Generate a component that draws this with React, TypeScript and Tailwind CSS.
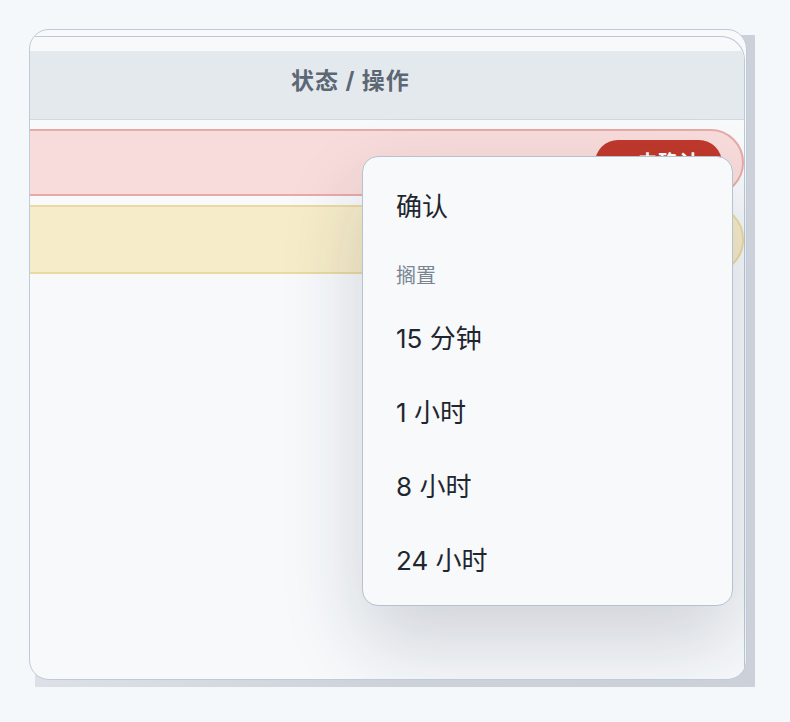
import React from "react";

const font = { fontFamily: 'Inter, "Noto Sans CJK SC", "Noto Sans", sans-serif' };

export default function App() {
  return (
    <div className="min-h-[722px] w-[790px] bg-[#f4f8fb] pt-[29px] pl-[29px]" style={font}>
      <div className="relative w-[718px] h-[651px]">
        <div className="absolute left-[6px] top-[6px] w-[720px] h-[652px] bg-gradient-to-r from-[#dde1e7] via-[#cdd2da] to-[#ccd1d9]" />
        <div className="relative h-full w-full rounded-[20px] border-[1.5px] border-[#bfcbda] bg-[#f7f9fb] overflow-hidden">
          <div className="mt-[6px] mr-[1px] h-[700px] border-t-[1.5px] border-r-[1.5px] border-[#bcc8d6] rounded-tr-[24px] overflow-hidden">
            <div className="pt-[14px]">
              <div className="h-[69px] bg-[#e4e9ee] border-b-[1.5px] border-[#d0d8e1] flex items-center pl-[261px] pb-[7px]">
                <span className="text-[23px] font-bold tracking-[1px] text-[#5c6774]">状态 / 操作</span>
              </div>
              <div className="mt-[9px] flex flex-col gap-[9px]">
                <div className="-ml-[4px] h-[67px] bg-[#f8dcdb] border-2 border-[#e8aaa6] rounded-r-[34px] flex items-center justify-end pr-[20px]">
                  <div className="h-[46px] w-[127px] rounded-full bg-[#c0392b] flex items-center justify-center gap-[8px] pl-[4px]">
                    <span className="w-[8px] h-[8px] rounded-full bg-white" />
                    <span className="text-[21px] font-bold text-white">未确认</span>
                  </div>
                </div>
                <div className="-ml-[4px] h-[69px] bg-[#f6ecc9] border-2 border-[#ebd9a0] rounded-r-[34px]" />
              </div>
            </div>
          </div>
          <div className="absolute left-[332px] top-[126px] w-[371px] h-[450px] rounded-[16px] border-[1.5px] border-[#b4c2d1] bg-[#f7f9fb] shadow-[0_36px_80px_rgba(30,41,59,0.18)] pt-[12px] pb-[8px] px-[33px] flex flex-col text-[#1e2630]">
            <div className="h-[74px] flex items-center text-[26px]">确认</div>
            <div className="h-[58px] flex items-center pt-[8px] text-[20px] text-[#7a8592]">搁置</div>
            <div className="h-[74px] flex items-center text-[26px]">15 分钟</div>
            <div className="h-[74px] flex items-center text-[26px]">1 小时</div>
            <div className="h-[74px] flex items-center text-[26px]">8 小时</div>
            <div className="h-[74px] flex items-center text-[26px]">24 小时</div>
          </div>
        </div>
      </div>
    </div>
  );
}
